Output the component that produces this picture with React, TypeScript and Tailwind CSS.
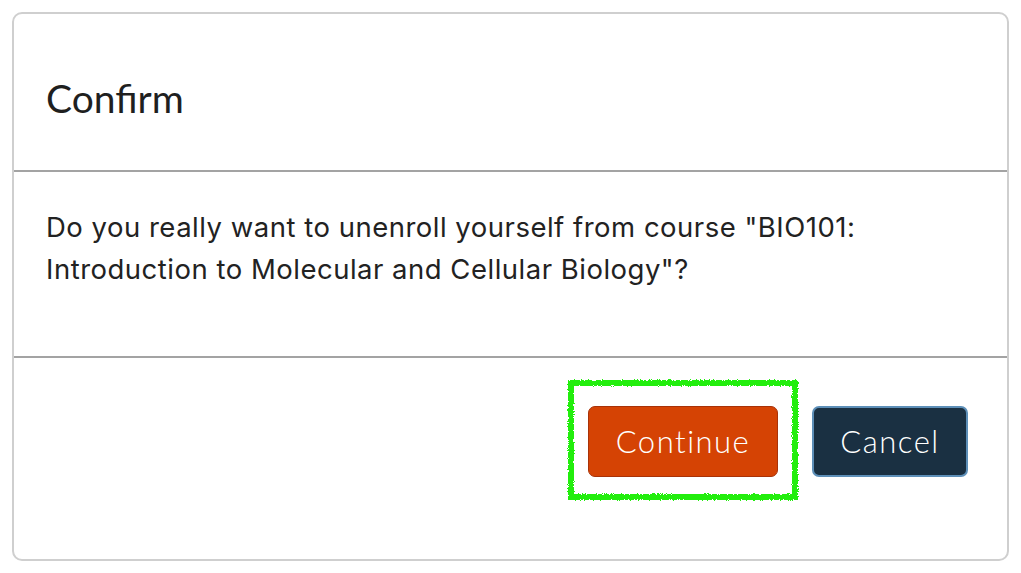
import React from 'react';

function Highlight() {
  return (
    <svg className="pointer-events-none absolute -left-[22px] -top-[28px]" width="234" height="124" viewBox="0 0 234 124">
      <defs>
        <filter id="rough" x="-10%" y="-10%" width="120%" height="120%">
          <feTurbulence type="fractalNoise" baseFrequency="0.9" numOctaves="2" seed="3" />
          <feDisplacementMap in="SourceGraphic" scale="3.5" />
        </filter>
      </defs>
      <rect x="5" y="5" width="224" height="114" fill="none" stroke="#22ee0a" strokeWidth="6" filter="url(#rough)" />
    </svg>
  );
}

export default function App() {
  return (
    <div className="w-[1021px] h-[573px] bg-white p-[12px]">
      <div className="flex h-[549px] flex-col rounded-[10px] border-2 border-[#cfcfcf] bg-white">
        {/* Header */}
        <div className="flex h-[158px] items-center px-[32px] pt-[12px] border-b-2 border-[#a3a3a3]">
          <h2 className="text-[39px] font-normal text-[#1f1f1f]" style={{ fontFamily: 'Lato, "Noto Sans", sans-serif' }}>
            Confirm
          </h2>
        </div>

        {/* Body */}
        <div className="h-[186px] px-[32px] pt-[34px] border-b-2 border-[#a3a3a3]">
          <p className="max-w-[880px] text-[27.5px] leading-[42px] tracking-[0.5px] text-[#222]" style={{ fontFamily: 'Inter, "Noto Sans", sans-serif' }}>
            Do you really want to unenroll yourself from course "BIO101: Introduction to Molecular and Cellular Biology"?
          </p>
        </div>

        {/* Footer */}
        <div className="flex flex-1 items-start justify-end gap-[34px] px-[39px] pt-[48px]">
          <div className="relative">
            <Highlight />
            <button className="h-[71px] w-[190px] rounded-[7px] border border-[#a83208] bg-[#d54304] text-[31px] font-light tracking-[1.5px] text-white" style={{ fontFamily: 'Lato, "Noto Sans", sans-serif' }}>
              Continue
            </button>
          </div>
          <button className="h-[71px] w-[156px] rounded-[7px] border-2 border-[#5d8fb8] bg-[#1a3042] text-[31px] font-light tracking-[1.5px] text-white" style={{ fontFamily: 'Lato, "Noto Sans", sans-serif' }}>
            Cancel
          </button>
        </div>
      </div>
    </div>
  );
}
